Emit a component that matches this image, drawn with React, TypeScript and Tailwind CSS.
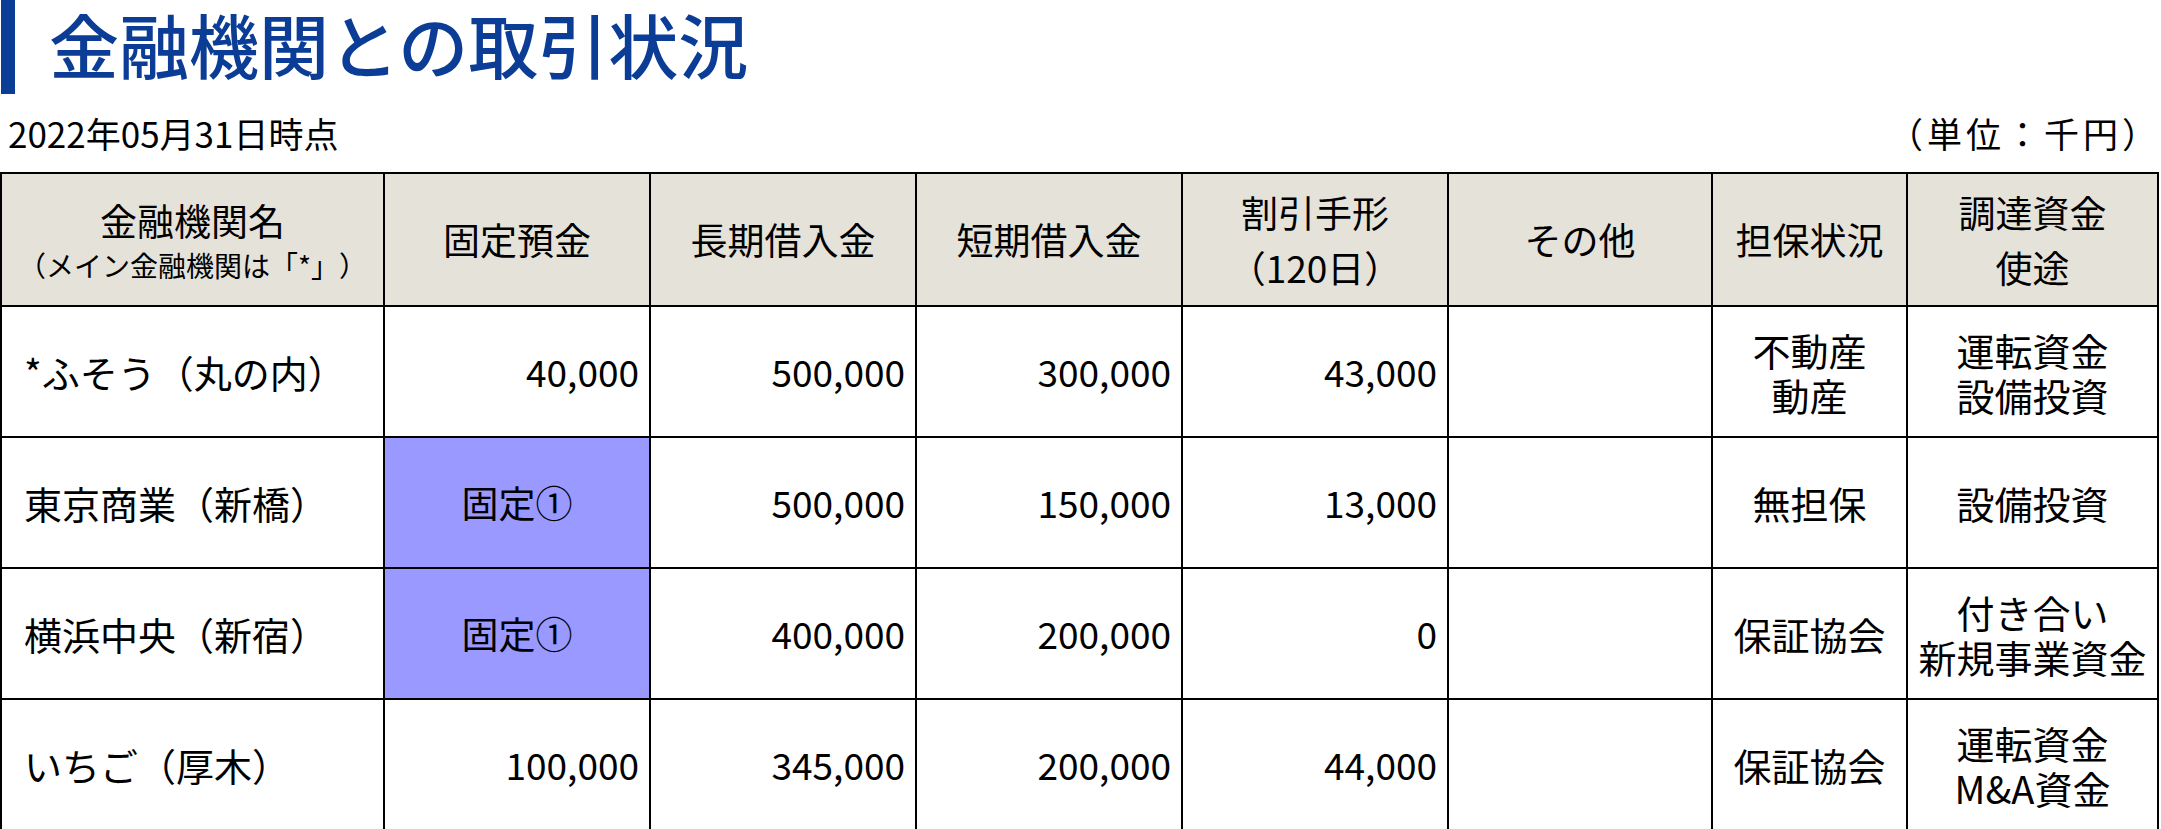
import React from "react";

const font = { fontFamily: '"Noto Sans CJK JP", "Noto Sans", sans-serif' };

type Row = {
  name: string;
  fixed: string;
  fixedBlue?: boolean;
  long: string;
  short: string;
  bill: string;
  other: string;
  collateral: string[];
  purpose: string[];
};

const rows: Row[] = [
  { name: "*ふそう（丸の内）", fixed: "40,000", long: "500,000", short: "300,000", bill: "43,000", other: "", collateral: ["不動産", "動産"], purpose: ["運転資金", "設備投資"] },
  { name: "東京商業（新橋）", fixed: "固定①", fixedBlue: true, long: "500,000", short: "150,000", bill: "13,000", other: "", collateral: ["無担保"], purpose: ["設備投資"] },
  { name: "横浜中央（新宿）", fixed: "固定①", fixedBlue: true, long: "400,000", short: "200,000", bill: "0", other: "", collateral: ["保証協会"], purpose: ["付き合い", "新規事業資金"] },
  { name: "いちご（厚木）", fixed: "100,000", long: "345,000", short: "200,000", bill: "44,000", other: "", collateral: ["保証協会"], purpose: ["運転資金", "M&A資金"] },
];

function Lines({ items }: { items: string[] }) {
  return (
    <div className="flex flex-col items-center leading-[45px]">
      {items.map((t) => (
        <span key={t}>{t}</span>
      ))}
    </div>
  );
}

export default function App() {
  const th = "border-2 border-black bg-[#e5e2da] font-normal text-center align-middle text-[37px] leading-[55px] text-black";
  const td = "border-2 border-black align-middle text-[38px] font-normal text-black";
  const num = "border-2 border-black align-middle text-[37px] font-normal text-black text-right pr-[10px]";
  return (
    <div className="w-[2161px] h-[829px] bg-white overflow-hidden [text-spacing-trim:space-all]" style={font}>
      <div className="flex items-start h-[94px]">
        <div className="w-[14px] h-[94px] ml-[1px] bg-[#0b3d96]" />
        <h1 className="ml-[34px] text-[70px] leading-[88px] font-medium text-[#0b3d96]">
          金融機関との取引状況
        </h1>
      </div>
      <div className="flex justify-between items-center h-[78px] pl-[8px] pr-[0px] text-[35px] font-normal text-black">
        <span>2022年05月31日時点</span>
        <span className="tracking-[4px]">（単位：千円）</span>
      </div>
      <table className="table-fixed border-collapse w-[2157px]">
        <colgroup>
          <col className="w-[383px]" />
          <col className="w-[266px]" />
          <col className="w-[266px]" />
          <col className="w-[266px]" />
          <col className="w-[266px]" />
          <col className="w-[264px]" />
          <col className="w-[195px]" />
          <col className="w-[251px]" />
        </colgroup>
        <thead>
          <tr className="h-[133px]">
            <th className={th}>
              <div className="flex flex-col items-center">
                <span className="leading-[50px]">金融機関名</span>
                <span className="text-[28px] leading-[40px]">（メイン金融機関は「*」）</span>
              </div>
            </th>
            <th className={th}>固定預金</th>
            <th className={th}>長期借入金</th>
            <th className={th}>短期借入金</th>
            <th className={th}>
              <div className="flex flex-col items-center">
                <span>割引手形</span>
                <span>（120日）</span>
              </div>
            </th>
            <th className={th}>その他</th>
            <th className={th}>担保状況</th>
            <th className={th}>
              <div className="flex flex-col items-center">
                <span>調達資金</span>
                <span>使途</span>
              </div>
            </th>
          </tr>
        </thead>
        <tbody>
          {rows.map((r) => (
            <tr key={r.name} className="h-[131px]">
              <td className={td + " pl-[22px]"}>{r.name}</td>
              {r.fixedBlue ? (
                <td className="border-2 border-black align-middle text-[37px] font-normal text-black bg-[#9999ff] text-center">{r.fixed}</td>
              ) : (
                <td className={num}>{r.fixed}</td>
              )}
              <td className={num}>{r.long}</td>
              <td className={num}>{r.short}</td>
              <td className={num}>{r.bill}</td>
              <td className={num}>{r.other}</td>
              <td className={td + " text-center"}>
                <Lines items={r.collateral} />
              </td>
              <td className={td + " text-center"}>
                <Lines items={r.purpose} />
              </td>
            </tr>
          ))}
        </tbody>
      </table>
    </div>
  );
}
